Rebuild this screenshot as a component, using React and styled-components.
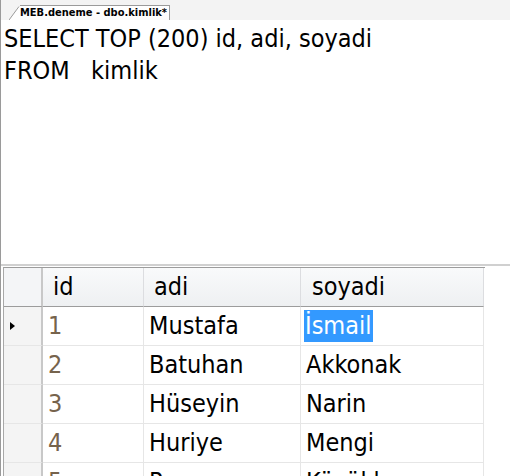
import React from "react";
import styled, { createGlobalStyle } from "styled-components";

const Global = createGlobalStyle`
  html, body { margin: 0; padding: 0; background: #ffffff; }
  body { font-family: "DejaVu Sans Condensed", "DejaVu Sans", sans-serif; }
`;

const Frame = styled.div`
  width: 510px;
  height: 476px;
  overflow: hidden;
  display: flex;
  flex-direction: column;
  border-left: 1px solid #9a9a9a;
  box-sizing: border-box;
  background: #fff;
`;

const TabStrip = styled.div`
  height: 20px;
  flex: none;
  display: flex;
  align-items: flex-end;
  background: #f3f3f3;
  padding-left: 8px;
  box-sizing: border-box;
`;

const TabSlant = styled.svg`
  display: block;
  width: 11px;
  height: 14px;
  flex: none;
`;

const Tab = styled.div`
  height: 14px;
  padding: 0 2px 0 0;
  border-top: 1px solid #9a9a9a;
  border-right: 1px solid #9a9a9a;
  background: linear-gradient(#ffffff, #fbfbfb);
  font-family: "DejaVu Sans Condensed", "DejaVu Sans", sans-serif;
  font-weight: bold;
  font-size: 11px;
  line-height: 14px;
  color: #000;
  white-space: nowrap;
  box-sizing: content-box;
`;

const Editor = styled.div`
  height: 244px;
  flex: none;
  padding: 3px 0 0 3px;
  box-sizing: border-box;
  font-size: 25px;
  line-height: 32px;
  color: #000;
  white-space: pre;
`;

const GridTop = styled.div`
  height: 3px;
  flex: none;
  border-top: 2px solid #d0d0d0;
  box-sizing: border-box;
  background: #fff;
`;

const Grid = styled.div`
  display: grid;
  grid-template-columns: 39px 101px 157px 183px;
  grid-auto-rows: 39px;
  margin-left: 2px;
  border-left: 1px solid #a8a8a8;
  width: 481px;
  border-top: 1px solid #9c9c9c;
`;

const HeadCell = styled.div`
  background: linear-gradient(#f9fafb, #eef0f2);
  border-right: 1px solid #dcdde0;
  border-bottom: 1px solid #9c9c9c;
  font-size: 25px;
  line-height: 37px;
  padding-left: ${(p) => p.$pad || 10}px;
  color: #000;
  box-sizing: border-box;
`;

const Corner = styled(HeadCell)`
  border-right: 2px solid #c8c8c8;
  background: #f4f5f7;
`;

const RowHead = styled.div`
  background: #f4f4f4;
  border-right: 2px solid #c8c8c8;
  border-bottom: 1px solid #e6e6e6;
  box-sizing: border-box;
  display: flex;
  align-items: center;
  padding-left: 6px;
`;

const Cell = styled.div`
  border-right: 1px solid #e6e6e6;
  border-bottom: 1px solid #e6e6e6;
  font-size: 25px;
  line-height: 38px;
  padding-left: 5px;
  color: ${(p) => (p.$muted ? "#76634c" : "#000")};
  box-sizing: border-box;
  white-space: nowrap;
  overflow: hidden;
`;

const Selected = styled.span`
  display: inline-block;
  background: #3399ff;
  color: #fff;
  line-height: 32px;
  padding: 0 1px;
  margin-left: -2px;
`;

const rows = [
  ["1", "Mustafa", "İsmail"],
  ["2", "Batuhan", "Akkonak"],
  ["3", "Hüseyin", "Narin"],
  ["4", "Huriye", "Mengi"],
  ["5", "Pınar", "Küçükbaş"],
];

export default function App() {
  return (
    <>
      <Global />
      <Frame>
        <TabStrip>
          <TabSlant viewBox="0 0 11 14">
            <polygon points="0,14 10,0.5 11,0.5 11,14" fill="#ffffff" />
            <line x1="0" y1="14" x2="10" y2="0.5" stroke="#9a9a9a" strokeWidth="1" />
          </TabSlant>
          <Tab>MEB.deneme - dbo.kimlik*</Tab>
        </TabStrip>
        <Editor>{"SELECT TOP (200) id, adi, soyadi\nFROM   kimlik"}</Editor>
        <GridTop />
        <Grid>
          <Corner />
          <HeadCell $pad={10}>id</HeadCell>
          <HeadCell $pad={10}>adi</HeadCell>
          <HeadCell $pad={11}>soyadi</HeadCell>
          {rows.map((r, i) => (
            <React.Fragment key={i}>
              <RowHead>
                {i === 0 && (
                  <svg width="5" height="8" viewBox="0 0 5 8">
                    <polygon points="0,0 5,4 0,8" fill="#000" />
                  </svg>
                )}
              </RowHead>
              <Cell $muted>{r[0]}</Cell>
              <Cell>{r[1]}</Cell>
              <Cell>{i === 0 ? <Selected>{r[2]}</Selected> : r[2]}</Cell>
            </React.Fragment>
          ))}
        </Grid>
      </Frame>
    </>
  );
}
